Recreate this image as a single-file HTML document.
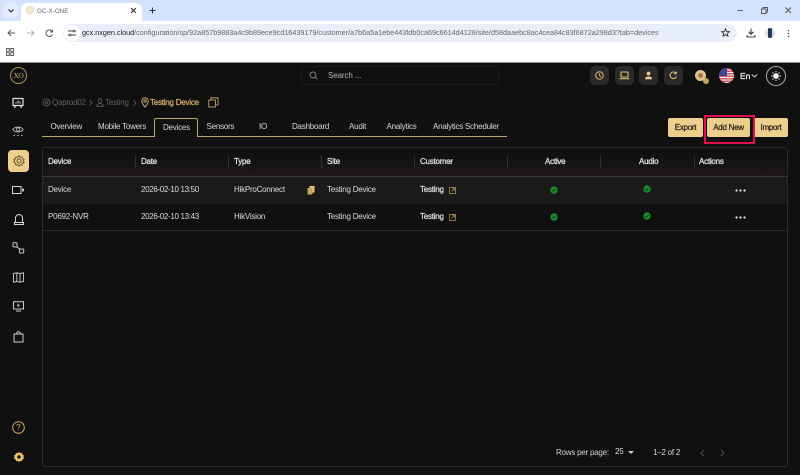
<!DOCTYPE html>
<html><head><meta charset="utf-8"><style>
*{box-sizing:border-box}
html,body{margin:0;padding:0;width:800px;height:475px;overflow:hidden;background:#101010;font-family:"Liberation Sans",sans-serif}
body{filter:blur(.25px)}
.a{position:absolute;white-space:nowrap}
svg{position:absolute;overflow:visible}
.t{font-size:8px;letter-spacing:-.23px;color:#dcdcdc;line-height:10px}
.date{letter-spacing:-.33px}
.s{-webkit-text-stroke:.25px currentColor}
.bc{font-size:8px;letter-spacing:-.23px;line-height:10px}
.h{font-size:8px;letter-spacing:-.23px;color:#e4e4e4;-webkit-text-stroke:.25px #e4e4e4;line-height:10px;top:157px}
.tab{font-size:8px;letter-spacing:-.22px;color:#d8d8d8;line-height:10px;top:121.500px}
.sep{position:absolute;width:1px;height:13px;top:156px;background:#333}
.btn{position:absolute;top:118px;height:19px;background:#eccf8c;border-radius:2px;color:#2a2418;font-size:8px;letter-spacing:-.28px;-webkit-text-stroke:.25px #2a2418;text-align:center;line-height:19px}
.tb{position:absolute;top:66px;width:19px;height:19px;border-radius:5px;background:#2a2a2a}
</style></head><body>
<!-- browser chrome -->
<div class="a" style="left:0;top:0;width:800px;height:21px;background:#d3e3fd"></div>
<div class="a" style="left:3px;top:3px;width:15px;height:15px;border-radius:5px;background:#e3edfd"></div>
<svg style="left:8px;top:9px" width="6" height="4"><path d="M.5.500L3 3 5.500.5" fill="none" stroke="#333" stroke-width="1.200"/></svg>
<div class="a" style="left:21px;top:3px;width:121px;height:18px;background:#fff;border-radius:6px 6px 0 0"></div>
<div class="a" style="left:26px;top:6px;width:8px;height:8px;border-radius:50%;background:#f3ead6;border:1px solid #e6d8b8"></div>
<div class="a" style="left:37px;top:6.500px;font-size:6.300px;line-height:9px;color:#666">GC-X-ONE</div>
<svg style="left:130px;top:7px" width="7" height="7"><path d="M1 1L6 6M6 1L1 6" stroke="#333" stroke-width="1.100"/></svg>
<svg style="left:149px;top:7px" width="7" height="7"><path d="M3.500.5V6.500M.5 3.500H6.500" stroke="#333" stroke-width="1"/></svg>
<svg style="left:737px;top:10px" width="7" height="1"><path d="M.5.500H6" stroke="#666"/></svg>
<svg style="left:761px;top:7px" width="7" height="7"><path d="M.5 2H5V6.500H.5ZM2 2V.5H6.500V5H5" fill="none" stroke="#555" stroke-width=".9"/></svg>
<svg style="left:785px;top:7px" width="7" height="7"><path d="M.5.500L6 6M6 .5L.5 6" stroke="#555" stroke-width=".9"/></svg>
<div class="a" style="left:0;top:21px;width:800px;height:41px;background:#fff"></div>
<div class="a" style="left:0;top:62px;width:800px;height:1px;background:#8a8a8a"></div>
<svg style="left:7px;top:29px" width="9" height="8"><path d="M8 4H1M4 1L1 4 4 7" fill="none" stroke="#555" stroke-width="1"/></svg>
<svg style="left:26px;top:29px" width="9" height="8"><path d="M1 4H8M5 1L8 4 5 7" fill="none" stroke="#b5b5b5" stroke-width="1"/></svg>
<svg style="left:45px;top:29px" width="9" height="9"><path d="M7.300 5.500A3.300 3.300 0 1 1 7 2.300M7.500.8V3H5.300" fill="none" stroke="#555" stroke-width="1"/></svg>
<div class="a" style="left:63px;top:24px;width:674px;height:18px;border-radius:9px;background:#e9effa"></div>
<div class="a" style="left:64px;top:25px;width:16px;height:16px;border-radius:50%;background:#fff"></div>
<svg style="left:68px;top:29px" width="8" height="8"><path d="M0 2H5M7 2H8M0 6H1M3 6H8" stroke="#444" stroke-width="1"/><circle cx="6" cy="2" r="1" fill="none" stroke="#444" stroke-width=".8"/><circle cx="2" cy="6" r="1" fill="none" stroke="#444" stroke-width=".8"/></svg>
<div class="a" style="left:82px;top:28px;font-size:7.220px;line-height:10px;color:#666"><span style="color:#222">gcx.nxgen.cloud</span>/configuration/sp/92a857b9883a4c9b89ece9cd16439179/customer/a7b6a5a1ebe443fdb0ca69c6614d4128/site/d58daaebc8ac4cea84c83f6872a298d3?tab=devices</div>
<svg style="left:721px;top:28px" width="9" height="9"><path d="M4.500 .8L5.600 3.400 8.400 3.600 6.300 5.400 6.900 8.100 4.500 6.700 2.100 8.100 2.700 5.400 .6 3.600 3.400 3.400Z" fill="none" stroke="#333" stroke-width=".9"/></svg>
<svg style="left:746px;top:28px" width="10" height="10"><path d="M5 .5V6M2.500 3.800L5 6.300 7.500 3.800M1 7V9H9V7" fill="none" stroke="#444" stroke-width="1.100"/></svg>
<div class="a" style="left:765px;top:28px;width:10px;height:10px;border-radius:50%;background:linear-gradient(90deg,#e0e4ea 30%,#23395a 30%,#23395a 70%,#d8dce2 70%)"></div>
<svg style="left:787px;top:29px" width="3" height="9"><circle cx="1.500" cy="1.500" r=".8" fill="#444"/><circle cx="1.500" cy="4.500" r=".8" fill="#444"/><circle cx="1.500" cy="7.500" r=".8" fill="#444"/></svg>
<svg style="left:6px;top:48px" width="8" height="8"><path d="M.5.500H3.300V3.300H.5ZM4.700.5H7.500V3.300H4.700ZM.5 4.700H3.300V7.500H.5ZM4.700 4.700H7.500V7.500H4.700Z" fill="none" stroke="#555" stroke-width=".9"/></svg>

<!-- app top bar -->
<div class="a" style="left:10px;top:67px;width:17px;height:17px;border-radius:50%;border:1px solid #a8905a"></div>
<div class="a" style="left:13.500px;top:71px;font-family:'Liberation Serif',serif;font-size:7.500px;line-height:9px;color:#cfb27a;letter-spacing:-.5px">XO</div>
<div class="a" style="left:301px;top:66px;width:198px;height:19px;border:1px solid #1c1c1c;border-radius:4px"></div>
<svg style="left:309px;top:71px" width="9" height="9"><circle cx="4" cy="4" r="3" fill="none" stroke="#888" stroke-width=".9"/><path d="M6.300 6.300L8.300 8.300" stroke="#888" stroke-width=".9"/></svg>
<div class="a" style="left:328px;top:70.500px;font-size:8px;letter-spacing:-.1px;line-height:10px;color:#b5b5b5">Search ...</div>

<div class="tb" style="left:590px"></div>
<svg style="left:595px;top:71px" width="9" height="9"><circle cx="4.500" cy="4.500" r="3.700" fill="none" stroke="#d9b56f" stroke-width="1"/><path d="M4.500 2.300V4.700L6.200 5.600" fill="none" stroke="#d9b56f" stroke-width=".9"/></svg>
<div class="tb" style="left:615px"></div>
<svg style="left:619px;top:71px" width="11" height="9"><path d="M2 1H9V6H2ZM.5 7.700H10.500" fill="none" stroke="#d9b56f" stroke-width="1.100"/></svg>
<div class="tb" style="left:639px"></div>
<svg style="left:644px;top:71px" width="9" height="9"><circle cx="4.500" cy="2.500" r="1.900" fill="#eccf8c"/><path d="M1 8.300C1 6 3 5.500 4.500 5.500S8 6 8 8.300Z" fill="#eccf8c"/></svg>
<div class="tb" style="left:664px"></div>
<svg style="left:669px;top:71px" width="9" height="9"><path d="M7.500 5.500A3.300 3.300 0 1 1 6.800 2M7.300.5V2.700H5.100" fill="none" stroke="#d9b56f" stroke-width="1.100"/></svg>
<div class="a" style="left:695px;top:70px;width:11px;height:11px;border-radius:50%;background:#dcc291"></div>
<div class="a" style="left:698px;top:73px;width:5px;height:5px;border-radius:50%;background:#a8763c"></div>
<div class="a" style="left:703px;top:78px;width:6px;height:6px;border-radius:50%;background:#c9a44f"></div>
<div class="a" style="left:719px;top:68px;width:15px;height:15px;border-radius:50%;background:repeating-linear-gradient(180deg,#d9535f 0,#d9535f 1.300px,#f2f2f2 1.300px,#f2f2f2 2.500px);overflow:hidden"><div style="width:8px;height:8px;background:#3a4a9a"></div></div>
<div class="a s" style="left:740px;top:70.500px;font-size:8.500px;line-height:10px;color:#eee">En</div>
<svg style="left:751px;top:74px" width="7" height="4"><path d="M.8.500L3.500 3 6.200.5" fill="none" stroke="#ddd" stroke-width=".9"/></svg>
<div class="a" style="left:766px;top:66px;width:20px;height:20px;border-radius:50%;border:1px solid #aaa"></div>
<svg style="left:770px;top:70px" width="12" height="12"><circle cx="6" cy="6" r="2.800" fill="#fff"/><path d="M6 1V2.500M6 9.500V11M1 6H2.500M9.500 6H11M2.500 2.500L3.500 3.500M8.500 8.500L9.500 9.500M9.500 2.500L8.500 3.500M3.500 8.500L2.500 9.500" stroke="#fff" stroke-width=".9"/></svg>

<!-- sidebar -->
<svg style="left:12px;top:97px" width="12" height="13"><path d="M1 1.500H11V8.500H1ZM3.500 8.500L2.500 11M8.500 8.500L9.500 11" fill="none" stroke="#e0e0e0" stroke-width="1.200"/><path d="M4 6.500V5M6 6.500V3.500M8 6.500V4.500" stroke="#e0e0e0"/></svg>
<svg style="left:12px;top:125px" width="12" height="13"><path d="M.8 4.500C3 1.200 9 1.200 11.200 4.500 9 7.800 3 7.800 .8 4.500Z" fill="none" stroke="#bbb" stroke-width=".9"/><circle cx="6" cy="4.500" r="1.700" fill="none" stroke="#bbb" stroke-width=".9"/><path d="M1.500 10.500H3M5.300 10.500H6.700M9 10.500H10.500" stroke="#bbb" stroke-width="1"/></svg>
<div class="a" style="left:8px;top:150px;width:21px;height:22px;border-radius:4px;background:#eccf8c"></div>
<svg style="left:12.500px;top:155px" width="12" height="12"><path d="M6 .8L7.200 2.300 9 1.900 9.500 3.700 11.200 4.600 10.300 6 11.200 7.400 9.500 8.300 9 10.100 7.200 9.700 6 11.200 4.800 9.700 3 10.100 2.500 8.300.8 7.400 1.700 6 .8 4.600 2.500 3.700 3 1.900 4.800 2.300Z" fill="none" stroke="#5a4a28" stroke-width=".9"/><circle cx="6" cy="6" r="2" fill="none" stroke="#5a4a28" stroke-width=".9"/></svg>
<svg style="left:12px;top:185px" width="13" height="10"><path d="M.5 1.500H9V8.500H.5Z" fill="none" stroke="#d5d5d5" stroke-width="1"/><path d="M10 3.500H12V6.500H10Z" fill="#bbb"/></svg>
<svg style="left:14px;top:213px" width="10" height="13"><path d="M1.500 9.500V5A3.500 3.500 0 0 1 8.500 5V9.500M.5 9.500H9.500V11.500H.5Z" fill="none" stroke="#d5d5d5" stroke-width="1"/></svg>
<svg style="left:12px;top:242px" width="13" height="13"><path d="M1 1.500Q1 .8 1.700 .8H4.300Q5 .8 5 1.500V4.300Q5 5 4.300 5H1.700Q1 5 1 4.300ZM7.500 7.700Q7.500 7 8.200 7H11Q11.700 7 11.700 7.700V10.300Q11.700 11 11 11H8.200Q7.500 11 7.500 10.300ZM4.500 4.500L8 7.500" fill="none" stroke="#ccc" stroke-width="1"/></svg>
<svg style="left:13px;top:272px" width="11" height="11"><path d="M.5 1.500L3.800.8 7 1.500 10.500.8V9.500L7 10.200 3.800 9.500 .5 10.200ZM3.800.8V9.500M7 1.500V10.200" fill="none" stroke="#ccc" stroke-width=".9"/></svg>
<svg style="left:13px;top:301px" width="11" height="11"><path d="M.5 .8H10.500V8H.5ZM3 10H8" fill="none" stroke="#ccc" stroke-width="1"/><path d="M4.500 2.800L7 4.400 4.500 6Z" fill="#ccc"/></svg>
<svg style="left:13px;top:331px" width="11" height="12"><path d="M1 3H10V11H1ZM3.500 3C3.500 0 7.500 0 7.500 3" fill="none" stroke="#ccc" stroke-width="1"/></svg>
<svg style="left:12px;top:421px" width="13" height="13"><circle cx="6.500" cy="6.500" r="5.800" fill="none" stroke="#c9a45f" stroke-width="1"/></svg>
<div class="a" style="left:16px;top:422px;font-size:8.500px;line-height:11px;color:#c9a45f">?</div>
<svg style="left:13px;top:451px" width="12" height="12"><path d="M6 .8L7.200 2.300 9 1.900 9.500 3.700 11.200 4.600 10.300 6 11.200 7.400 9.500 8.300 9 10.100 7.200 9.700 6 11.200 4.800 9.700 3 10.100 2.500 8.300.8 7.400 1.700 6 .8 4.600 2.500 3.700 3 1.900 4.800 2.300Z" fill="#eec36a"/><circle cx="6" cy="6" r="1.700" fill="#101010"/></svg>

<!-- breadcrumb -->
<svg style="left:42px;top:98px" width="9" height="9"><circle cx="4.500" cy="4.500" r="3.500" fill="none" stroke="#555" stroke-width="1"/><circle cx="4.500" cy="4.500" r="1.300" fill="none" stroke="#555" stroke-width=".8"/></svg>
<div class="a bc" style="left:52px;top:97.500px;color:#5f5f5f">Qaprod02</div>
<svg style="left:89px;top:100px" width="4" height="6"><path d="M.5.500L3 3 .5 5.500" fill="none" stroke="#5f5f5f" stroke-width=".8"/></svg>
<svg style="left:96px;top:98px" width="8" height="9"><circle cx="4" cy="2.500" r="1.900" fill="none" stroke="#666" stroke-width=".8"/><path d="M.8 8.300C.8 6 2.500 5.500 4 5.500S7.200 6 7.200 8.300Z" fill="none" stroke="#666" stroke-width=".8"/></svg>
<div class="a bc" style="left:105px;top:97.500px;color:#5f5f5f">Testing</div>
<svg style="left:133px;top:100px" width="4" height="6"><path d="M.5.500L3 3 .5 5.500" fill="none" stroke="#5f5f5f" stroke-width=".8"/></svg>
<svg style="left:141px;top:97px" width="8" height="11"><path d="M4 10C2 8 .8 6 .8 4A3.200 3.200 0 0 1 7.200 4C7.200 6 6 8 4 10Z" fill="none" stroke="#d9b56f" stroke-width=".9"/><circle cx="4" cy="4" r="1.200" fill="none" stroke="#d9b56f" stroke-width=".8"/></svg>
<div class="a bc s" style="left:150px;top:97.500px;color:#d2ad69">Testing Device</div>
<svg style="left:208px;top:97px" width="11" height="11"><path d="M.8 3H7.500V10H.8ZM3 3V.8H10V8H7.500" fill="none" stroke="#b09360" stroke-width="1"/></svg>

<!-- tabs -->
<div class="a" style="left:42px;top:136px;width:112px;height:1px;background:#bba36d"></div>
<div class="a" style="left:198px;top:136px;width:309px;height:1px;background:#bba36d"></div>
<div class="a" style="left:154px;top:118px;width:44px;height:19px;border:1px solid #bba36d;border-bottom:0;border-radius:2px 2px 0 0"></div>
<div class="a tab" style="left:50.500px">Overview</div>
<div class="a tab" style="left:98px">Mobile Towers</div>
<div class="a tab" style="left:163px;top:122.500px">Devices</div>
<div class="a tab" style="left:206.500px">Sensors</div>
<div class="a tab" style="left:259px">IO</div>
<div class="a tab" style="left:292px">Dashboard</div>
<div class="a tab" style="left:349px">Audit</div>
<div class="a tab" style="left:386.500px">Analytics</div>
<div class="a tab" style="left:433px">Analytics Scheduler</div>

<!-- buttons -->
<div class="btn" style="left:668px;width:35px">Export</div>
<div class="btn" style="left:707px;width:43px">Add New</div>
<div class="btn" style="left:754px;width:34px">Import</div>
<div class="a" style="left:704px;top:115px;width:51px;height:29px;border:2px solid #e0104f"></div>

<!-- table -->
<div class="a" style="left:42px;top:147px;width:746px;height:320px;border:1px solid #2c2c2c;border-radius:3px"></div>
<div class="a" style="left:43px;top:148px;width:744px;height:29px;background:linear-gradient(180deg,#0f0f0f,#1b1817);border-bottom:1px solid #3a3a3a"></div>
<div class="a" style="left:43px;top:177px;width:744px;height:27px;background:#1a1a1a"></div>
<div class="a" style="left:43px;top:230px;width:744px;height:1px;background:#2a2a2a"></div>
<div class="sep" style="left:135px"></div><div class="sep" style="left:228px"></div><div class="sep" style="left:321px"></div><div class="sep" style="left:414px"></div><div class="sep" style="left:507px"></div><div class="sep" style="left:600px"></div><div class="sep" style="left:694px"></div>
<div class="a h" style="left:48px">Device</div>
<div class="a h" style="left:141px">Date</div>
<div class="a h" style="left:234px">Type</div>
<div class="a h" style="left:327px">Site</div>
<div class="a h" style="left:420px">Customer</div>
<div class="a h" style="left:545px">Active</div>
<div class="a h" style="left:639px">Audio</div>
<div class="a h" style="left:699px">Actions</div>

<div class="a t" style="left:48px;top:185px">Device</div>
<div class="a t date" style="left:141px;top:185px">2026-02-10 13:50</div>
<div class="a t" style="left:234px;top:185px">HikProConnect</div>
<svg style="left:307px;top:186px" width="8" height="9"><path d="M2.500 0H7.500V6.500H2.500Z" fill="#e8c67f"/><path d="M.5 2H5.500V8.500H.5Z" fill="#c9a45f"/></svg>
<div class="a t" style="left:327px;top:185px">Testing Device</div>
<div class="a t s" style="left:420px;top:185px">Testing</div>
<svg style="left:449px;top:187px" width="7" height="7"><path d="M.5.500H6.500V6.500H.5ZM2.500 4.500L5.500 1.500M3.500 1.500H5.500V3.500" fill="none" stroke="#b89b5e" stroke-width=".7"/></svg>
<svg style="left:550px;top:186px" width="8" height="8"><circle cx="4" cy="4" r="3.700" fill="#1b8a2a"/><path d="M2.200 4L3.500 5.300 5.800 2.800" fill="none" stroke="#0c3a12" stroke-width=".8"/></svg>
<svg style="left:643px;top:185px" width="8" height="8"><circle cx="4" cy="4" r="3.700" fill="#1b8a2a"/><path d="M2.200 4L3.500 5.300 5.800 2.800" fill="none" stroke="#0c3a12" stroke-width=".8"/></svg>
<svg style="left:735px;top:189px" width="12" height="3"><circle cx="1.500" cy="1.500" r="1.100" fill="#eee"/><circle cx="5.500" cy="1.500" r="1.100" fill="#eee"/><circle cx="9.500" cy="1.500" r="1.100" fill="#eee"/></svg>

<div class="a t" style="left:48px;top:212px">P0692-NVR</div>
<div class="a t date" style="left:141px;top:212px">2026-02-10 13:43</div>
<div class="a t" style="left:234px;top:212px">HikVision</div>
<div class="a t" style="left:327px;top:212px">Testing Device</div>
<div class="a t s" style="left:420px;top:212px">Testing</div>
<svg style="left:449px;top:214px" width="7" height="7"><path d="M.5.500H6.500V6.500H.5ZM2.500 4.500L5.500 1.500M3.500 1.500H5.500V3.500" fill="none" stroke="#b89b5e" stroke-width=".7"/></svg>
<svg style="left:550px;top:213px" width="8" height="8"><circle cx="4" cy="4" r="3.700" fill="#1b8a2a"/><path d="M2.200 4L3.500 5.300 5.800 2.800" fill="none" stroke="#0c3a12" stroke-width=".8"/></svg>
<svg style="left:643px;top:212px" width="8" height="8"><circle cx="4" cy="4" r="3.700" fill="#1b8a2a"/><path d="M2.200 4L3.500 5.300 5.800 2.800" fill="none" stroke="#0c3a12" stroke-width=".8"/></svg>
<svg style="left:735px;top:216px" width="12" height="3"><circle cx="1.500" cy="1.500" r="1.100" fill="#eee"/><circle cx="5.500" cy="1.500" r="1.100" fill="#eee"/><circle cx="9.500" cy="1.500" r="1.100" fill="#eee"/></svg>

<!-- pagination -->
<div class="a t" style="left:556px;top:448px;color:#cfcfcf">Rows per page:</div>
<div class="a t" style="left:615px;top:447px">25</div>
<svg style="left:628px;top:451px" width="6" height="3"><path d="M0 0H6L3 3Z" fill="#ccc"/></svg>
<div class="a t" style="left:653px;top:447.500px">1–2 of 2</div>
<svg style="left:700px;top:449px" width="5" height="8"><path d="M4 .8L1 4 4 7.200" fill="none" stroke="#4f4f4f" stroke-width="1"/></svg>
<svg style="left:720px;top:449px" width="5" height="8"><path d="M1 .8L4 4 1 7.200" fill="none" stroke="#4f4f4f" stroke-width="1"/></svg>
</body></html>
